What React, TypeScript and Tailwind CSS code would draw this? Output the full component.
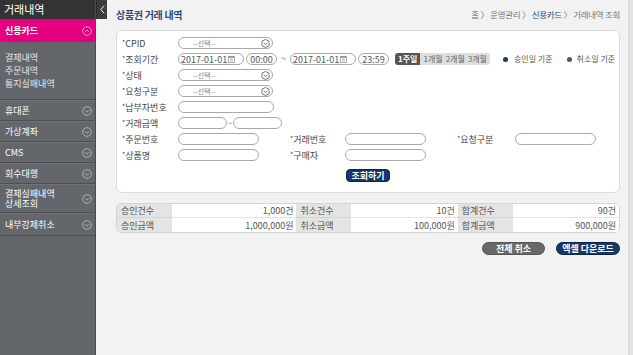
import { ReactNode } from 'react';

const font = { fontFamily: '"Noto Sans CJK KR", "Noto Sans", sans-serif' };

// small circled chevron used in selects and the side menu
function CircleChevron({ up = false, color = '#555', size = 9 }: { up?: boolean; color?: string; size?: number }) {
  return (
    <svg width={size} height={size} viewBox="0 0 10 10" className="shrink-0">
      <circle cx="5" cy="5" r="4.3" fill="none" stroke={color} strokeWidth="0.9" />
      <path d={up ? 'M3 6 L5 4 L7 6' : 'M3 4.2 L5 6.2 L7 4.2'} fill="none" stroke={color} strokeWidth="0.9" />
    </svg>
  );
}

function CalendarIcon() {
  return (
    <svg width="7" height="8" viewBox="0 0 7 8" className="shrink-0">
      <rect x="0.5" y="1.5" width="6" height="6" fill="none" stroke="#999" strokeWidth="0.8" />
      <rect x="0.5" y="1.5" width="6" height="1.5" fill="#999" />
      <path d="M2 0.5 V2 M5 0.5 V2 M2 4.3 H5 M2 5.8 H5" stroke="#999" strokeWidth="0.7" />
    </svg>
  );
}

function Select({ w = 'w-[95px]' }: { w?: string }) {
  return (
    <div className={`${w} shrink-0 h-[12px] rounded-full border border-[#a9a9a9] flex items-center justify-between pl-[14px] pr-[2px]`}>
      <span className="text-[7px] text-[#888] leading-none">--선택--</span>
      <CircleChevron />
    </div>
  );
}

function Input({ w }: { w: string }) {
  return <div className={`${w} shrink-0 h-[12px] rounded-full border border-[#a9a9a9] bg-white`} />;
}

function DateBox({ value }: { value: string }) {
  return (
    <div className="w-[66px] shrink-0 h-[12px] rounded-full border border-[#a9a9a9] flex items-center gap-[1px] pl-[2px]">
      <span className="text-[9px] text-[#555] leading-none">{value}</span>
      <CalendarIcon />
    </div>
  );
}

function TimeBox({ value }: { value: string }) {
  return (
    <div className="w-[31px] shrink-0 h-[12px] rounded-full border border-[#a9a9a9] flex items-center justify-center">
      <span className="text-[9px] text-[#555] leading-none">{value}</span>
    </div>
  );
}

function Label({ children, w = 'w-[56px]' }: { children: ReactNode; w?: string }) {
  return (
    <div className={`${w} shrink-0 text-[9px] text-[#444] leading-none`}>
      <span className="text-[7px] align-top">*</span>
      {children}
    </div>
  );
}

function Row({ children }: { children: ReactNode }) {
  return <div className="h-[16px] flex items-center whitespace-nowrap">{children}</div>;
}

const menu = [
  { name: '휴대폰', h: 'h-[21px]' },
  { name: '가상계좌', h: 'h-[21px]' },
  { name: 'CMS', h: 'h-[21px]' },
  { name: '회수대행', h: 'h-[21px]' },
  { name: '결제실패내역\n상세조회', h: 'h-[29px]' },
  { name: '내부강제취소', h: 'h-[23px]' },
];

const summary = [
  ['승인건수', '1,000건', '취소건수', '10건', '합계건수', '90건'],
  ['승인금액', '1,000,000원', '취소금액', '100,000원', '합계금액', '900,000원'],
];

export default function App() {
  return (
    <div className="relative w-[633px] h-[355px] flex overflow-hidden bg-[#f2f2f2]" style={font}>
      {/* side menu */}
      <aside className="w-[96px] shrink-0 bg-[#63666b] border-r border-[#4a4c50] flex flex-col">
        <div className="h-[19px] bg-[#333333] flex items-center pl-[4px] text-[11px] text-white leading-none">거래내역</div>
        <div className="h-[23px] bg-[#e4007f] flex items-center justify-between pl-[5px] pr-[3px]">
          <span className="text-[9px] font-bold text-white leading-none">신용카드</span>
          <CircleChevron up color="#f6a6d2" size={10} />
        </div>
        <div className="h-[58px] border-b border-[#4c4f53] pt-[9px] pl-[5px] flex flex-col text-[9px] text-[#e6e6e6] leading-[13px]">
          <span>결제내역</span>
          <span>주문내역</span>
          <span>통지실패내역</span>
        </div>
        {menu.map((m) => (
          <div
            key={m.name}
            className={`${m.h} border-b border-[#4c4f53] border-t border-t-[#6e7176] flex items-center justify-between pl-[5px] pr-[3px]`}
          >
            <span className="text-[9px] text-white leading-[10px] whitespace-pre-line">{m.name}</span>
            <CircleChevron color="#b8babd" size={10} />
          </div>
        ))}
      </aside>

      {/* collapse toggle */}
      <div className="absolute left-[96px] top-0 w-[11px] h-[19px] bg-[#3c3c3c] border-l border-[#2a2a2a] flex items-center justify-center">
        <svg width="5" height="9" viewBox="0 0 5 9">
          <path d="M4.2 0.6 L0.8 4.5 L4.2 8.4" fill="none" stroke="#eee" strokeWidth="1" />
        </svg>
      </div>

      {/* main */}
      <main className="flex-1 min-w-0 pl-[20px] pr-[8px] flex flex-col">
        <div className="h-[30px] flex items-center justify-between pb-[1px]">
          <h1 className="text-[10px] font-bold text-[#2c4b7c] leading-none tracking-[-0.3px]">상품권 거래 내역</h1>
          <div className="text-[8.5px] text-[#777] leading-none tracking-[-0.3px]">
            홈 〉 운영관리 〉 <span className="text-[#2c4b7c]">신용카드</span> 〉 거래내역 조회
          </div>
        </div>

        <section className="h-[163px] bg-white rounded-[6px] border border-[#dcdcdc] pl-[5px] pt-[4px] flex flex-col overflow-hidden">
          <Row>
            <Label>CPID</Label>
            <Select />
          </Row>
          <Row>
            <Label>조회기간</Label>
            <DateBox value="2017-01-01" />
            <div className="w-[2px] shrink-0" />
            <TimeBox value="00:00" />
            <span className="w-[13px] shrink-0 text-center text-[9px] text-[#666]">~</span>
            <DateBox value="2017-01-01" />
            <div className="w-[2px] shrink-0" />
            <TimeBox value="23:59" />
            <div className="ml-[6px] shrink-0 h-[12px] flex items-center rounded-[3px] overflow-hidden text-[8px] leading-none">
              <span className="h-full px-[3px] flex items-center bg-[#555] text-white font-bold">1주일</span>
              <span className="h-full px-[3px] flex items-center bg-[#dedede] text-[#666] gap-[3px]">
                <span>1개월</span>
                <span>2개월</span>
                <span>3개월</span>
              </span>
            </div>
            <span className="ml-[13px] shrink-0 w-[5px] h-[5px] rounded-full bg-[#1c3a6b]" />
            <span className="ml-[6px] shrink-0 text-[8px] text-[#555] leading-none">승인일 기준</span>
            <span className="ml-[14px] shrink-0 w-[5px] h-[5px] rounded-full bg-[#555]" />
            <span className="ml-[5px] shrink-0 text-[8px] text-[#555] leading-none">취소일 기준</span>
          </Row>
          <Row>
            <Label>상태</Label>
            <Select />
          </Row>
          <Row>
            <Label>요청구분</Label>
            <Select />
          </Row>
          <Row>
            <Label>납부자번호</Label>
            <Input w="w-[96px]" />
          </Row>
          <Row>
            <Label>거래금액</Label>
            <Input w="w-[49px]" />
            <span className="w-[6px] shrink-0 text-center text-[7px] text-[#666]">~</span>
            <Input w="w-[49px]" />
          </Row>
          <Row>
            <Label>주문번호</Label>
            <Input w="w-[81px]" />
            <div className="w-[31px] shrink-0" />
            <Label w="w-[55px]">거래번호</Label>
            <Input w="w-[81px]" />
            <div className="w-[31px] shrink-0" />
            <Label w="w-[58px]">요청구분</Label>
            <Input w="w-[81px]" />
          </Row>
          <Row>
            <Label>상품명</Label>
            <Input w="w-[81px]" />
            <div className="w-[31px] shrink-0" />
            <Label w="w-[55px]">구매자</Label>
            <Input w="w-[81px]" />
          </Row>
          <div className="mt-[6px] flex justify-center pr-[5px]">
            <button className="h-[13px] px-[4px] rounded-[4px] bg-[#173866] border border-[#0d2448] text-[9px] font-bold text-white leading-none">
              조회하기
            </button>
          </div>
        </section>

        <table className="mt-[10px] w-full border-separate border-spacing-0 rounded-[5px] border border-[#d4d4d4] overflow-hidden text-[9px] text-[#555] leading-none">
          <tbody>
            {summary.map((r, i) => (
              <tr key={i} className="h-[14px]">
                {r.map((c, j) =>
                  j % 2 === 0 ? (
                    <td key={j} className={`w-[55px] bg-[#e4e4e4] pl-[4px] ${i === 0 ? 'border-b border-[#d4d4d4]' : ''}`}>
                      {c}
                    </td>
                  ) : (
                    <td key={j} className={`bg-white text-right pr-[3px] ${i === 0 ? 'border-b border-[#e4e4e4]' : ''}`}>
                      {c}
                    </td>
                  )
                )}
              </tr>
            ))}
          </tbody>
        </table>

        <div className="mt-[9px] flex justify-end gap-[11px]">
          <button className="w-[63px] h-[13px] rounded-full bg-[#686868] border border-[#555] text-[9px] font-bold text-white leading-none">
            전체 취소
          </button>
          <button className="w-[64px] h-[13px] rounded-full bg-[#173866] border border-[#0d2448] text-[9px] font-bold text-white leading-none">
            엑셀 다운로드
          </button>
        </div>
      </main>

      {/* right scroll strip */}
      <div className="w-[5px] shrink-0 bg-[#e3e3e3] border-l border-[#d6d6d6]" />
    </div>
  );
}
